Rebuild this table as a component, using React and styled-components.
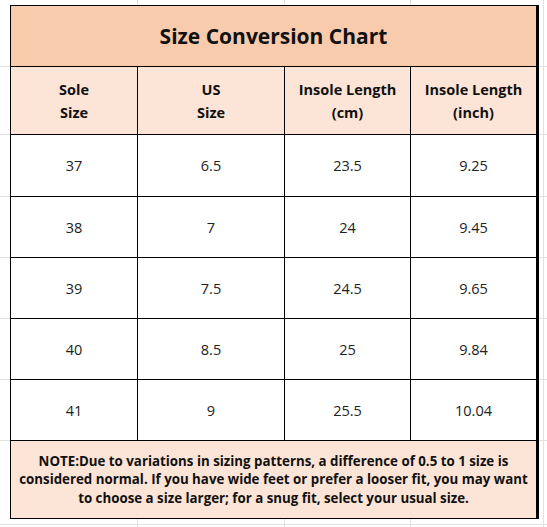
import React from 'react';
import styled, { createGlobalStyle } from 'styled-components';

const GlobalStyle = createGlobalStyle`
  html, body {
    margin: 0;
    padding: 0;
    background: #fff;
  }
  body {
    font-family: 'Open Sans', 'Noto Sans', Arial, sans-serif;
    color: #1a1a1a;
  }
`

const grid = 'linear-gradient(#e2e2e2, #e2e2e2)'

const Sheet = styled.div`
  width: 547px;
  height: 527px;
  box-sizing: border-box;
  padding: 5px 0 0 10px;
  background:
    ${grid} 0 66px / 100% 1px no-repeat,
    ${grid} 0 134px / 100% 1px no-repeat,
    ${grid} 0 196px / 100% 1px no-repeat,
    ${grid} 0 257px / 100% 1px no-repeat,
    ${grid} 0 318px / 100% 1px no-repeat,
    ${grid} 0 379px / 100% 1px no-repeat,
    ${grid} 0 440px / 100% 1px no-repeat,
    ${grid} 0 524px / 100% 1px no-repeat,
    ${grid} 137px 0 / 1px 100% no-repeat,
    ${grid} 284px 0 / 1px 100% no-repeat,
    ${grid} 410px 0 / 1px 100% no-repeat,
    ${grid} 543px 0 / 1px 100% no-repeat,
    #fff;
`

const Table = styled.div`
  display: grid;
  grid-template-columns: 126px 146px 125px 125px;
  grid-template-rows: 60px 67px 61px 60px 60px 60px 60px 77px;
  gap: 1px;
  width: 527px;
  background: #000;
  border: 1px solid #000;
`

const Cell = styled.div`
  display: flex;
  align-items: center;
  justify-content: center;
  text-align: center;
  background: ${p => p.$bg || '#fff'};
  grid-column: ${p => p.$span ? `span ${p.$span}` : 'auto'};
`

const Title = styled.h1`
  margin: 0;
  font-size: 21px;
  font-weight: 700;
  color: #111;
`

const Head = styled.div`
  font-size: 14.5px;
  font-weight: 700;
  line-height: 23px;
  color: #111;
`

const Value = styled.span`
  font-size: 14.5px;
  color: #222;
`

const Note = styled.p`
  margin: 0;
  font-size: 13.3px;
  font-weight: 700;
  line-height: 18.5px;
  color: #111;
  white-space: nowrap;
`

const rows = [
  ['37', '6.5', '23.5', '9.25'],
  ['38', '7', '24', '9.45'],
  ['39', '7.5', '24.5', '9.65'],
  ['40', '8.5', '25', '9.84'],
  ['41', '9', '25.5', '10.04'],
]

const heads = [
  ['Sole', 'Size'],
  ['US', 'Size'],
  ['Insole Length', '(cm)'],
  ['Insole Length', '(inch)'],
]

const App = () => (
  <Sheet>
    <GlobalStyle />
    <Table>
      <Cell $span={4} $bg="#F8CBAD">
        <Title>Size Conversion Chart</Title>
      </Cell>
      {heads.map(([a, b]) => (
        <Cell key={a + b} $bg="#FCE4D6">
          <Head>{a}<br />{b}</Head>
        </Cell>
      ))}
      {rows.map(r => r.map((v, i) => (
        <Cell key={r[0] + i}>
          <Value>{v}</Value>
        </Cell>
      )))}
      <Cell $span={4} $bg="#FCE4D6">
        <Note>
          NOTE:Due to variations in sizing patterns, a difference of 0.5 to 1 size is<br />
          considered normal. If you have wide feet or prefer a looser fit, you may want<br />
          to choose a size larger; for a snug fit, select your usual size.
        </Note>
      </Cell>
    </Table>
  </Sheet>
)

export default App;
